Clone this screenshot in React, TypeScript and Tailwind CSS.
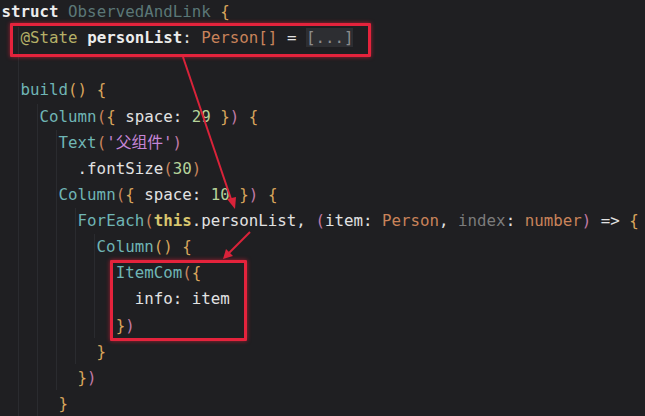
import React from "react";

const C = {
  def: "text-[#e2e2e2]",
  kw: "text-[#ececec] font-bold",
  cls: "text-[#5b7777]",
  br: "text-[#d9a55c]",
  br2: "text-[#c9845c]",
  pk: "text-[#c17aa6]",
  ann: "text-[#b5b067]",
  typ: "text-[#c9835a]",
  fn: "text-[#6fb5b5]",
  num: "text-[#b6d39a]",
  str: "text-[#c585d6]",
  ths: "text-[#d8c66e] font-bold",
  dim: "text-[#7c7c7c]",
};

type Seg = [string, string];

const lines: { indent: number; segs: Seg[] }[] = [
  { indent: 0, segs: [["struct", C.kw], [" ", C.def], ["ObservedAndLink", C.cls], [" ", C.def], ["{", C.br]] },
  {
    indent: 1,
    segs: [
      ["@State", C.ann],
      [" ", C.def],
      ["personList", C.kw],
      [": ", C.def],
      ["Person", C.typ],
      ["[]", C.br2],
      [" = ", C.def],
      ["[...]", "text-[#8d8d8d] bg-[#2d2e32]"],
    ],
  },
  { indent: 0, segs: [] },
  { indent: 1, segs: [["build", C.fn], ["()", C.br], [" ", C.def], ["{", C.br]] },
  {
    indent: 2,
    segs: [
      ["Column", C.fn],
      ["(", C.br2],
      ["{", C.br],
      [" space: ", C.def],
      ["29", C.num],
      [" ", C.def],
      ["}", C.br],
      [")", C.pk],
      [" ", C.def],
      ["{", C.br],
    ],
  },
  { indent: 3, segs: [["Text", C.fn], ["(", C.br2], ["'父组件'", C.str], [")", C.pk]] },
  { indent: 4, segs: [[".fontSize", C.def], ["(", C.br2], ["30", C.num], [")", C.br2]] },
  {
    indent: 3,
    segs: [
      ["Column", C.fn],
      ["(", C.br2],
      ["{", C.br],
      [" space: ", C.def],
      ["10", C.num],
      [" ", C.def],
      ["}", C.br],
      [")", C.pk],
      [" ", C.def],
      ["{", C.br],
    ],
  },
  {
    indent: 4,
    segs: [
      ["ForEach", C.fn],
      ["(", C.br2],
      ["this", C.ths],
      [".personList, ", C.def],
      ["(", C.pk],
      ["item: ", C.def],
      ["Person", C.typ],
      [", ", C.def],
      ["index", C.dim],
      [": ", C.def],
      ["number", C.typ],
      [")", C.pk],
      [" => ", C.def],
      ["{", C.br],
    ],
  },
  { indent: 5, segs: [["Column", C.fn], ["()", C.br], [" ", C.def], ["{", C.br]] },
  { indent: 6, segs: [["ItemCom", C.fn], ["(", C.br2], ["{", C.br]] },
  { indent: 7, segs: [["info: item", C.def]] },
  { indent: 6, segs: [["}", C.br], [")", C.pk]] },
  { indent: 5, segs: [["}", C.br]] },
  { indent: 4, segs: [["}", C.br], [")", C.pk]] },
  { indent: 3, segs: [["}", C.br]] },
];

export default function App() {
  return (
    <div className="relative w-[645px] h-[416px] overflow-hidden bg-[#1f1f22]">
      <div
        className="-mt-[1px] pl-[1.5px] text-[15.8px] leading-[26.13px] whitespace-pre"
        style={{ fontFamily: '"DejaVu Sans Mono", "Noto Sans CJK SC", monospace' }}
      >
        {lines.map((l, i) => (
          <div key={i} className="h-[26.13px]">
            <span>{"  ".repeat(l.indent)}</span>
            {l.segs.map((s, j) => (
              <span key={j} className={s[1]}>
                {s[0]}
              </span>
            ))}
          </div>
        ))}
      </div>

      <svg className="absolute inset-0 pointer-events-none" width="645" height="416">
        <g stroke="#2a2b2f" strokeWidth="1">
          <line x1="18.5" y1="27" x2="18.5" y2="416" />
          <line x1="37.5" y1="104" x2="37.5" y2="416" />
          <line x1="56.5" y1="130" x2="56.5" y2="390" />
          <line x1="75.5" y1="208" x2="75.5" y2="364" />
          <line x1="94.5" y1="234" x2="94.5" y2="338" />
        </g>
        <g stroke="#d9233a" strokeWidth="2" fill="#d9233a">
          <line x1="183" y1="57" x2="232" y2="202" />
          <polygon points="235,209 227,199 236,197" stroke="none" />
          <line x1="250" y1="232" x2="229" y2="253" />
          <polygon points="223,259 226,249 233,256" stroke="none" />
        </g>
      </svg>

      <div className="absolute left-[10px] top-[23px] w-[361px] h-[34px] border-[3px] border-[#e4233c] rounded-[1px] shadow-[0_0_4px_rgba(255,30,60,0.6)]" />
      <div className="absolute left-[110px] top-[260px] w-[137px] h-[81px] border-[3px] border-[#e4233c] rounded-[1px] shadow-[0_0_4px_rgba(255,30,60,0.6)]" />
    </div>
  );
}
